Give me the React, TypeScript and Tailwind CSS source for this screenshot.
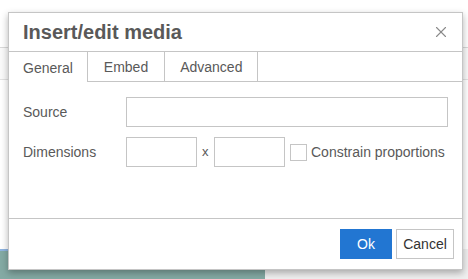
import { X } from 'lucide-react';

export default function App() {
  return (
    <div className="relative h-[279px] w-[468px] overflow-hidden bg-white font-['Liberation_Sans',Arial,sans-serif]">
      {/* Editor behind the dialog */}
      <div className="flex h-full flex-col">
        <div className="h-[48px] border-b border-[#d9d9d9] bg-white" />
        <div className="h-[32px] border-b border-[#e2e2e2] bg-[#fafafa]" />
        <div className="flex-1 bg-white" />
        <div className="flex h-[30px]">
          <div className="w-[265px] border-t-2 border-[#8fb4e0] bg-[#84aaa4]" />
          <div className="flex-1 bg-[#f0f0f0]" />
        </div>
      </div>

      {/* Dialog */}
      <div className="absolute left-[8px] top-[12px] flex h-[258px] w-[455px] flex-col border border-[#c5c5c5] bg-white shadow-[0_3px_7px_rgba(0,0,0,0.3)]">
        <div className="flex h-[39px] shrink-0 items-center justify-between border-b border-[#c5c5c5] pl-[14px] pr-[12px]">
          <h1 className="text-[20px] font-bold text-[#595959]">Insert/edit media</h1>
          <X size={18} strokeWidth={1.5} className="text-[#8a8a8a]" />
        </div>

        <div className="flex h-[30px] shrink-0 text-[14px] text-[#595959]">
          <div className="flex items-center border-r border-[#c5c5c5] px-[14px] pt-[2px]">General</div>
          <div className="flex items-center border-b border-r border-[#c5c5c5] px-[16px] pt-[2px]">Embed</div>
          <div className="flex items-center border-b border-r border-[#c5c5c5] px-[15px] pt-[2px]">Advanced</div>
          <div className="flex-1 border-b border-[#c5c5c5]" />
        </div>

        <div className="flex flex-1 flex-col gap-[10px] px-[14px] pt-[15px] text-[14px] text-[#595959]">
          <div className="flex items-center">
            <span className="w-[103px]">Source</span>
            <div className="h-[30px] w-[322px] border border-[#c5c5c5]" />
          </div>
          <div className="flex items-center">
            <span className="w-[103px]">Dimensions</span>
            <div className="h-[30px] w-[71px] border border-[#c5c5c5]" />
            <span className="w-[17px] pl-[5px] text-[13px]">x</span>
            <div className="h-[30px] w-[71px] border border-[#c5c5c5]" />
            <div className="ml-[5px] mr-[4px] h-[17px] w-[17px] border border-[#c5c5c5]" />
            <span>Constrain proportions</span>
          </div>
        </div>

        <div className="flex h-[51px] shrink-0 items-center justify-end gap-[4px] border-t border-[#c5c5c5] pr-[8px]">
          <button className="h-[30px] w-[52px] bg-[#2276d2] text-[14px] text-white">Ok</button>
          <button className="h-[30px] w-[58px] border border-[#c5c5c5] text-[14px] text-[#333]">Cancel</button>
        </div>
      </div>
    </div>
  );
}
